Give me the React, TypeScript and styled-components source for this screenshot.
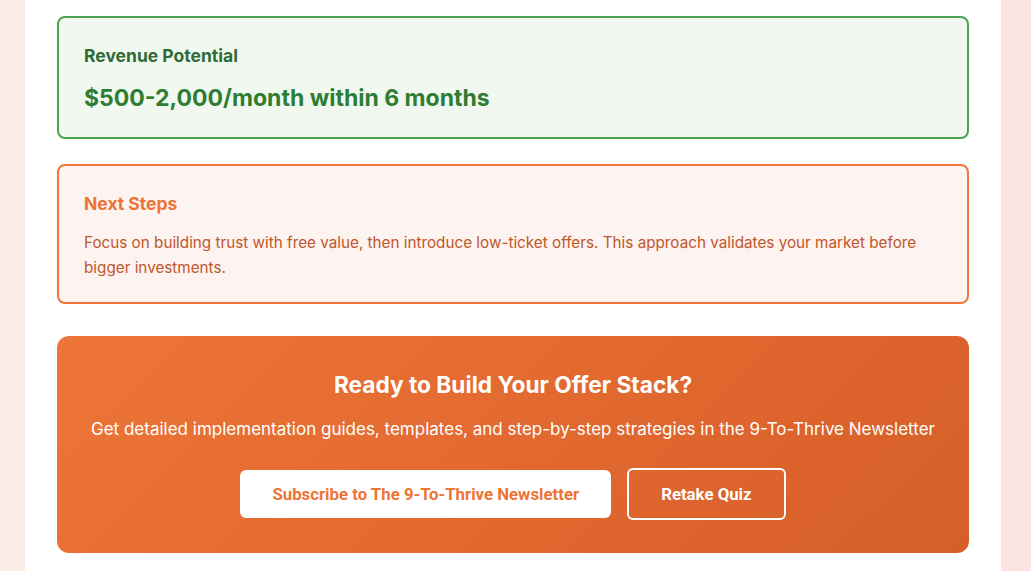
import React from "react";
import styled, { createGlobalStyle } from "styled-components";

const GlobalStyle = createGlobalStyle`
  * { box-sizing: border-box; }
  html, body {
    margin: 0;
    padding: 0;
    font-family: Inter, "Noto Sans", sans-serif;
    background: linear-gradient(90deg, #fbede6 0%, #faeae6 50%, #f9e3e3 100%);
    min-height: 100%;
  }
`;

const Page = styled.div`
  min-height: 571px;
  padding: 0 30px 0 25px;
`;

const Container = styled.div`
  background: #ffffff;
  padding: 16px 32px 19px;
  display: flex;
  flex-direction: column;
`;

type CardProps = { $border: string; $bg: string; $gap: number; $pb: number };

const Card = styled.div<CardProps>`
  border: 2px solid ${(p) => p.$border};
  background: ${(p) => p.$bg};
  border-radius: 8px;
  padding: 26px 25px ${(p) => p.$pb}px;
  margin-bottom: ${(p) => p.$gap}px;
`;

const CardTitle = styled.h3<{ $color: string }>`
  margin: 0 0 14px;
  font-size: 17.5px;
  font-weight: 700;
  line-height: 24px;
  color: ${(p) => p.$color};
`;

const Revenue = styled.div`
  font-size: 23px;
  font-weight: 700;
  line-height: 31px;
  color: #2e7d32;
  padding-top: 1px;
`;

const Body = styled.p`
  margin: 0;
  font-size: 15.25px;
  line-height: 25px;
  color: #c0562b;
`;

const Cta = styled.div`
  background: linear-gradient(135deg, #ee7538 0%, #d65e28 100%);
  border-radius: 12px;
  padding: 34px 32px 33px;
  text-align: center;
  color: #ffffff;
`;

const CtaTitle = styled.h2`
  margin: 0 0 16px;
  font-size: 22.7px;
  font-weight: 700;
  line-height: 30px;
`;

const CtaText = styled.p`
  margin: 0 0 26px;
  font-size: 17px;
  line-height: 26px;
`;

const Actions = styled.div`
  display: flex;
  justify-content: center;
  align-items: center;
  gap: 16px;
`;

const Button = styled.button<{ $primary?: boolean }>`
  font-family: Roboto, "Liberation Sans", sans-serif;
  font-size: 16.8px;
  font-weight: 700;
  border-radius: 6px;
  cursor: pointer;
  padding: 0 32px;
  height: ${(p) => (p.$primary ? "48px" : "52px")};
  border: ${(p) => (p.$primary ? "none" : "2px solid #ffffff")};
  background: ${(p) => (p.$primary ? "#ffffff" : "transparent")};
  color: ${(p) => (p.$primary ? "#ed7434" : "#ffffff")};
`;

export default function App() {
  return (
    <>
      <GlobalStyle />
      <Page>
        <Container>
          <Card $border="#4ca452" $bg="#f1f8f0" $gap={25} $pb={23}>
            <CardTitle $color="#2e6b35">Revenue Potential</CardTitle>
            <Revenue>$500-2,000/month within 6 months</Revenue>
          </Card>
          <Card $border="#ef773b" $bg="#fdf3f0" $gap={32} $pb={22}>
            <CardTitle $color="#ed7434">Next Steps</CardTitle>
            <Body>
              Focus on building trust with free value, then introduce low-ticket
              offers. This approach validates your market before bigger
              investments.
            </Body>
          </Card>
          <Cta>
            <CtaTitle>Ready to Build Your Offer Stack?</CtaTitle>
            <CtaText>
              Get detailed implementation guides, templates, and step-by-step
              strategies in the 9-To-Thrive Newsletter
            </CtaText>
            <Actions>
              <Button $primary>Subscribe to The 9-To-Thrive Newsletter</Button>
              <Button>Retake Quiz</Button>
            </Actions>
          </Cta>
        </Container>
      </Page>
    </>
  );
}
